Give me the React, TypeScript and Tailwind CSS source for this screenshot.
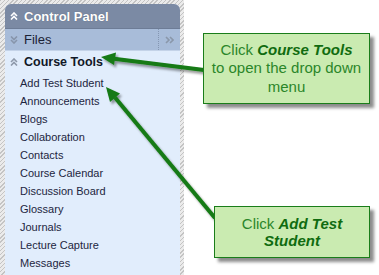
import React from 'react';

const tools = [
  'Add Test Student',
  'Announcements',
  'Blogs',
  'Collaboration',
  'Contacts',
  'Course Calendar',
  'Discussion Board',
  'Glossary',
  'Journals',
  'Lecture Capture',
  'Messages',
];

function DoubleChevron({ up, color }: { up: boolean; color: string }) {
  return (
    <svg width="8" height="8" viewBox="0 0 8 8" className="shrink-0">
      <g fill="none" stroke={color} strokeWidth="1.6" transform={up ? '' : 'rotate(180 4 4)'}>
        <path d="M1 4 L4 1 L7 4" />
        <path d="M1 7.5 L4 4.5 L7 7.5" />
      </g>
    </svg>
  );
}

export default function App() {
  return (
    <div className="relative w-[379px] h-[275px] bg-white overflow-hidden font-['Liberation_Sans',Arial,sans-serif]">
      <div className="w-[184px] h-full pt-[4px] pl-[5px] pr-[4px] bg-[repeating-linear-gradient(135deg,#c4c4c4_0px,#c4c4c4_1px,#ebebeb_1px,#ebebeb_3px)]">
        <div className="h-full flex flex-col rounded-t-[6px] overflow-hidden bg-[#e1edfc]">
          <div className="h-[25px] shrink-0 flex items-center gap-[6px] pl-[5px] bg-[#7b8aa4] border-b border-[#6d7c96]">
            <DoubleChevron up color="#ffffff" />
            <span className="text-[13px] font-bold text-white leading-none [text-shadow:0_0_1px_rgba(0,0,0,0.3)]">
              Control Panel
            </span>
          </div>
          <div className="h-[22px] shrink-0 flex items-center bg-[#a8bcd9] border-b border-[#c4d3e8]">
            <div className="flex-1 flex items-center gap-[6px] pl-[5px]">
              <DoubleChevron up={false} color="#8795ab" />
              <span className="text-[13px] text-[#1b2235] leading-none">Files</span>
            </div>
            <div className="w-[22px] h-full flex items-center justify-center border-l border-dotted border-[#8496b2]">
              <svg width="9" height="8" viewBox="0 0 9 8">
                <g fill="none" stroke="#8a97aa" strokeWidth="1.6">
                  <path d="M1 1 L4 4 L1 7" />
                  <path d="M5 1 L8 4 L5 7" />
                </g>
              </svg>
            </div>
          </div>
          <div className="h-[22px] shrink-0 flex items-center gap-[6px] pl-[5px]">
            <DoubleChevron up color="#8e99aa" />
            <span className="text-[12.5px] font-bold text-[#111827] leading-none">Course Tools</span>
          </div>
          <ul className="flex flex-col pl-[15px] pt-[1px]">
            {tools.map((t) => (
              <li key={t} className="h-[18px] flex items-center text-[11px] text-[#1d2540]">
                {t}
              </li>
            ))}
          </ul>
        </div>
      </div>

      <svg
        className="absolute left-0 top-0 pointer-events-none"
        width="379"
        height="275"
        viewBox="0 0 379 275"
      >
        <defs>
          <filter id="sh" x="-20%" y="-20%" width="140%" height="140%">
            <feDropShadow dx="2" dy="2.5" stdDeviation="1.2" floodColor="#000" floodOpacity="0.4" />
          </filter>
        </defs>
        <g filter="url(#sh)" fill="#147a14" stroke="#147a14">
          <line x1="204" y1="70" x2="114" y2="58.7" strokeWidth="4" />
          <polygon points="101,57 116,52.5 114,65" stroke="none" />
          <line x1="215" y1="218" x2="115" y2="97.5" strokeWidth="4" />
          <polygon points="106,87 120,93.5 110,102" stroke="none" />
        </g>
      </svg>

      <div className="absolute left-[203px] top-[33px] w-[167px] h-[71px] flex flex-col items-center justify-center bg-[#caebb1] border border-[#1a7d1a] shadow-[4px_4px_3px_rgba(0,0,0,0.45)] text-[15px] leading-[18.5px] text-[#2a862a] text-center">
        <div>
          Click <b className="italic text-[#106b10]">Course Tools</b>
        </div>
        <div>to open the drop down</div>
        <div>menu</div>
      </div>

      <div className="absolute left-[214px] top-[206px] w-[156px] h-[52px] flex flex-col items-center justify-center bg-[#caebb1] border border-[#1a7d1a] shadow-[4px_4px_3px_rgba(0,0,0,0.45)] text-[15px] leading-[17px] text-[#2a862a] text-center">
        <div>
          Click <b className="italic text-[#106b10]">Add Test</b>
        </div>
        <div>
          <b className="italic text-[#106b10]">Student</b>
        </div>
      </div>
    </div>
  );
}
